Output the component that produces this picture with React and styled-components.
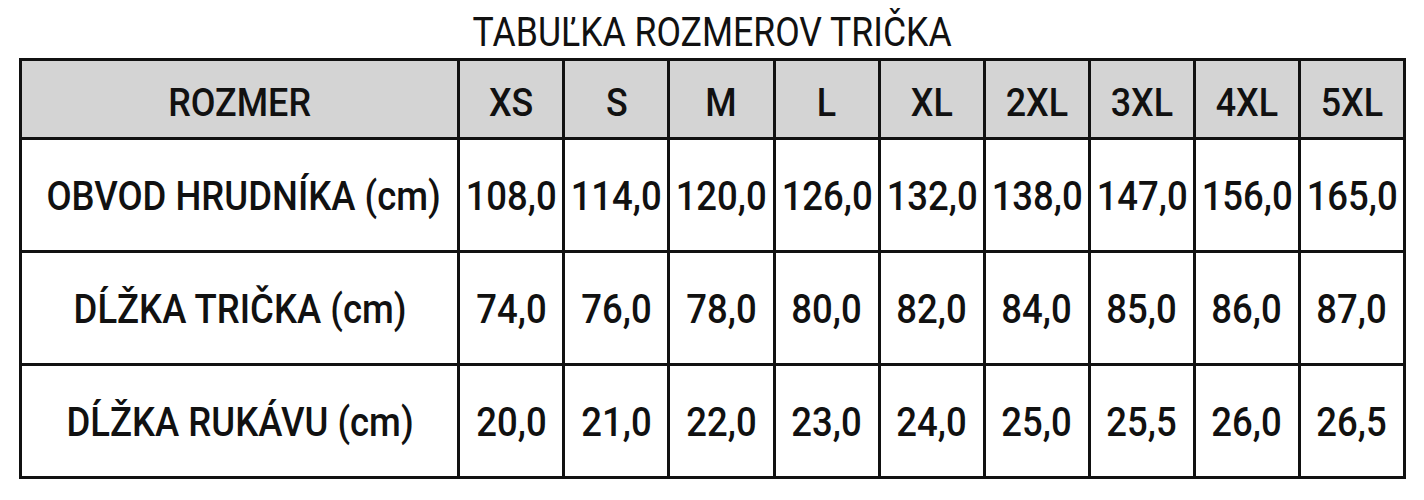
import React from "react";
import styled, { createGlobalStyle } from "styled-components";

const Global = createGlobalStyle`
  html, body { margin: 0; padding: 0; background: #ffffff; }
  body { font-family: Roboto, "Liberation Sans", sans-serif; color: #111; }
`;

const Page = styled.div`
  width: 1424px;
  height: 500px;
  box-sizing: border-box;
  padding: 12px 18px 0 19px;
  display: flex;
  flex-direction: column;
  align-items: stretch;
`;

const Title = styled.h1`
  margin: 0;
  height: 46px;
  font-size: 40px;
  font-weight: 400;
  line-height: 42px;
  text-align: center;
  color: #111;
`;

const Narrow = styled.span`
  display: inline-block;
  white-space: nowrap;
  transform: scaleX(${(p) => p.$sx});
  transform-origin: center;
`;

const Table = styled.table`
  border-collapse: collapse;
  table-layout: fixed;
  width: 1387px;
  border: 3px solid #111;
`;

const Cell = styled.td`
  border: 3px solid #111;
  padding: ${(p) => (p.$head ? "7px 0 0" : "1px 0 0")};
  text-align: center;
  vertical-align: middle;
  font-size: ${(p) => (p.$head ? "39px" : "41px")};
  font-weight: 500;
  white-space: nowrap;
  height: ${(p) => (p.$head ? "69px" : "109px")};
  background: ${(p) => (p.$head ? "#d4d4d4" : "#ffffff")};
  color: #111;
`;

const sizes = ["XS", "S", "M", "L", "XL", "2XL", "3XL", "4XL", "5XL"];
const rows = [
  { label: "OBVOD HRUDNÍKA (cm)", values: ["108,0", "114,0", "120,0", "126,0", "132,0", "138,0", "147,0", "156,0", "165,0"] },
  { label: "DĹŽKA TRIČKA (cm)", values: ["74,0", "76,0", "78,0", "80,0", "82,0", "84,0", "85,0", "86,0", "87,0"] },
  { label: "DĹŽKA RUKÁVU (cm)", values: ["20,0", "21,0", "22,0", "23,0", "24,0", "25,0", "25,5", "26,0", "26,5"] },
];

export default function App() {
  return (
    <>
      <Global />
      <Page>
        <Title>
          <Narrow $sx={0.89}>TABUĽKA ROZMEROV TRIČKA</Narrow>
        </Title>
        <Table>
          <colgroup>
            <col style={{ width: 438 }} />
            {sizes.map((s) => (
              <col key={s} style={{ width: 105 }} />
            ))}
          </colgroup>
          <tbody>
            <tr>
              <Cell as="th" $head>
                <Narrow $sx={0.92}>ROZMER</Narrow>
              </Cell>
              {sizes.map((s) => (
                <Cell as="th" $head key={s}>
                  <Narrow $sx={0.92}>{s}</Narrow>
                </Cell>
              ))}
            </tr>
            {rows.map((r) => (
              <tr key={r.label}>
                <Cell>
                  <Narrow $sx={0.89}>{r.label}</Narrow>
                </Cell>
                {r.values.map((v, i) => (
                  <Cell key={i}>
                    <Narrow $sx={0.89}>{v}</Narrow>
                  </Cell>
                ))}
              </tr>
            ))}
          </tbody>
        </Table>
      </Page>
    </>
  );
}
